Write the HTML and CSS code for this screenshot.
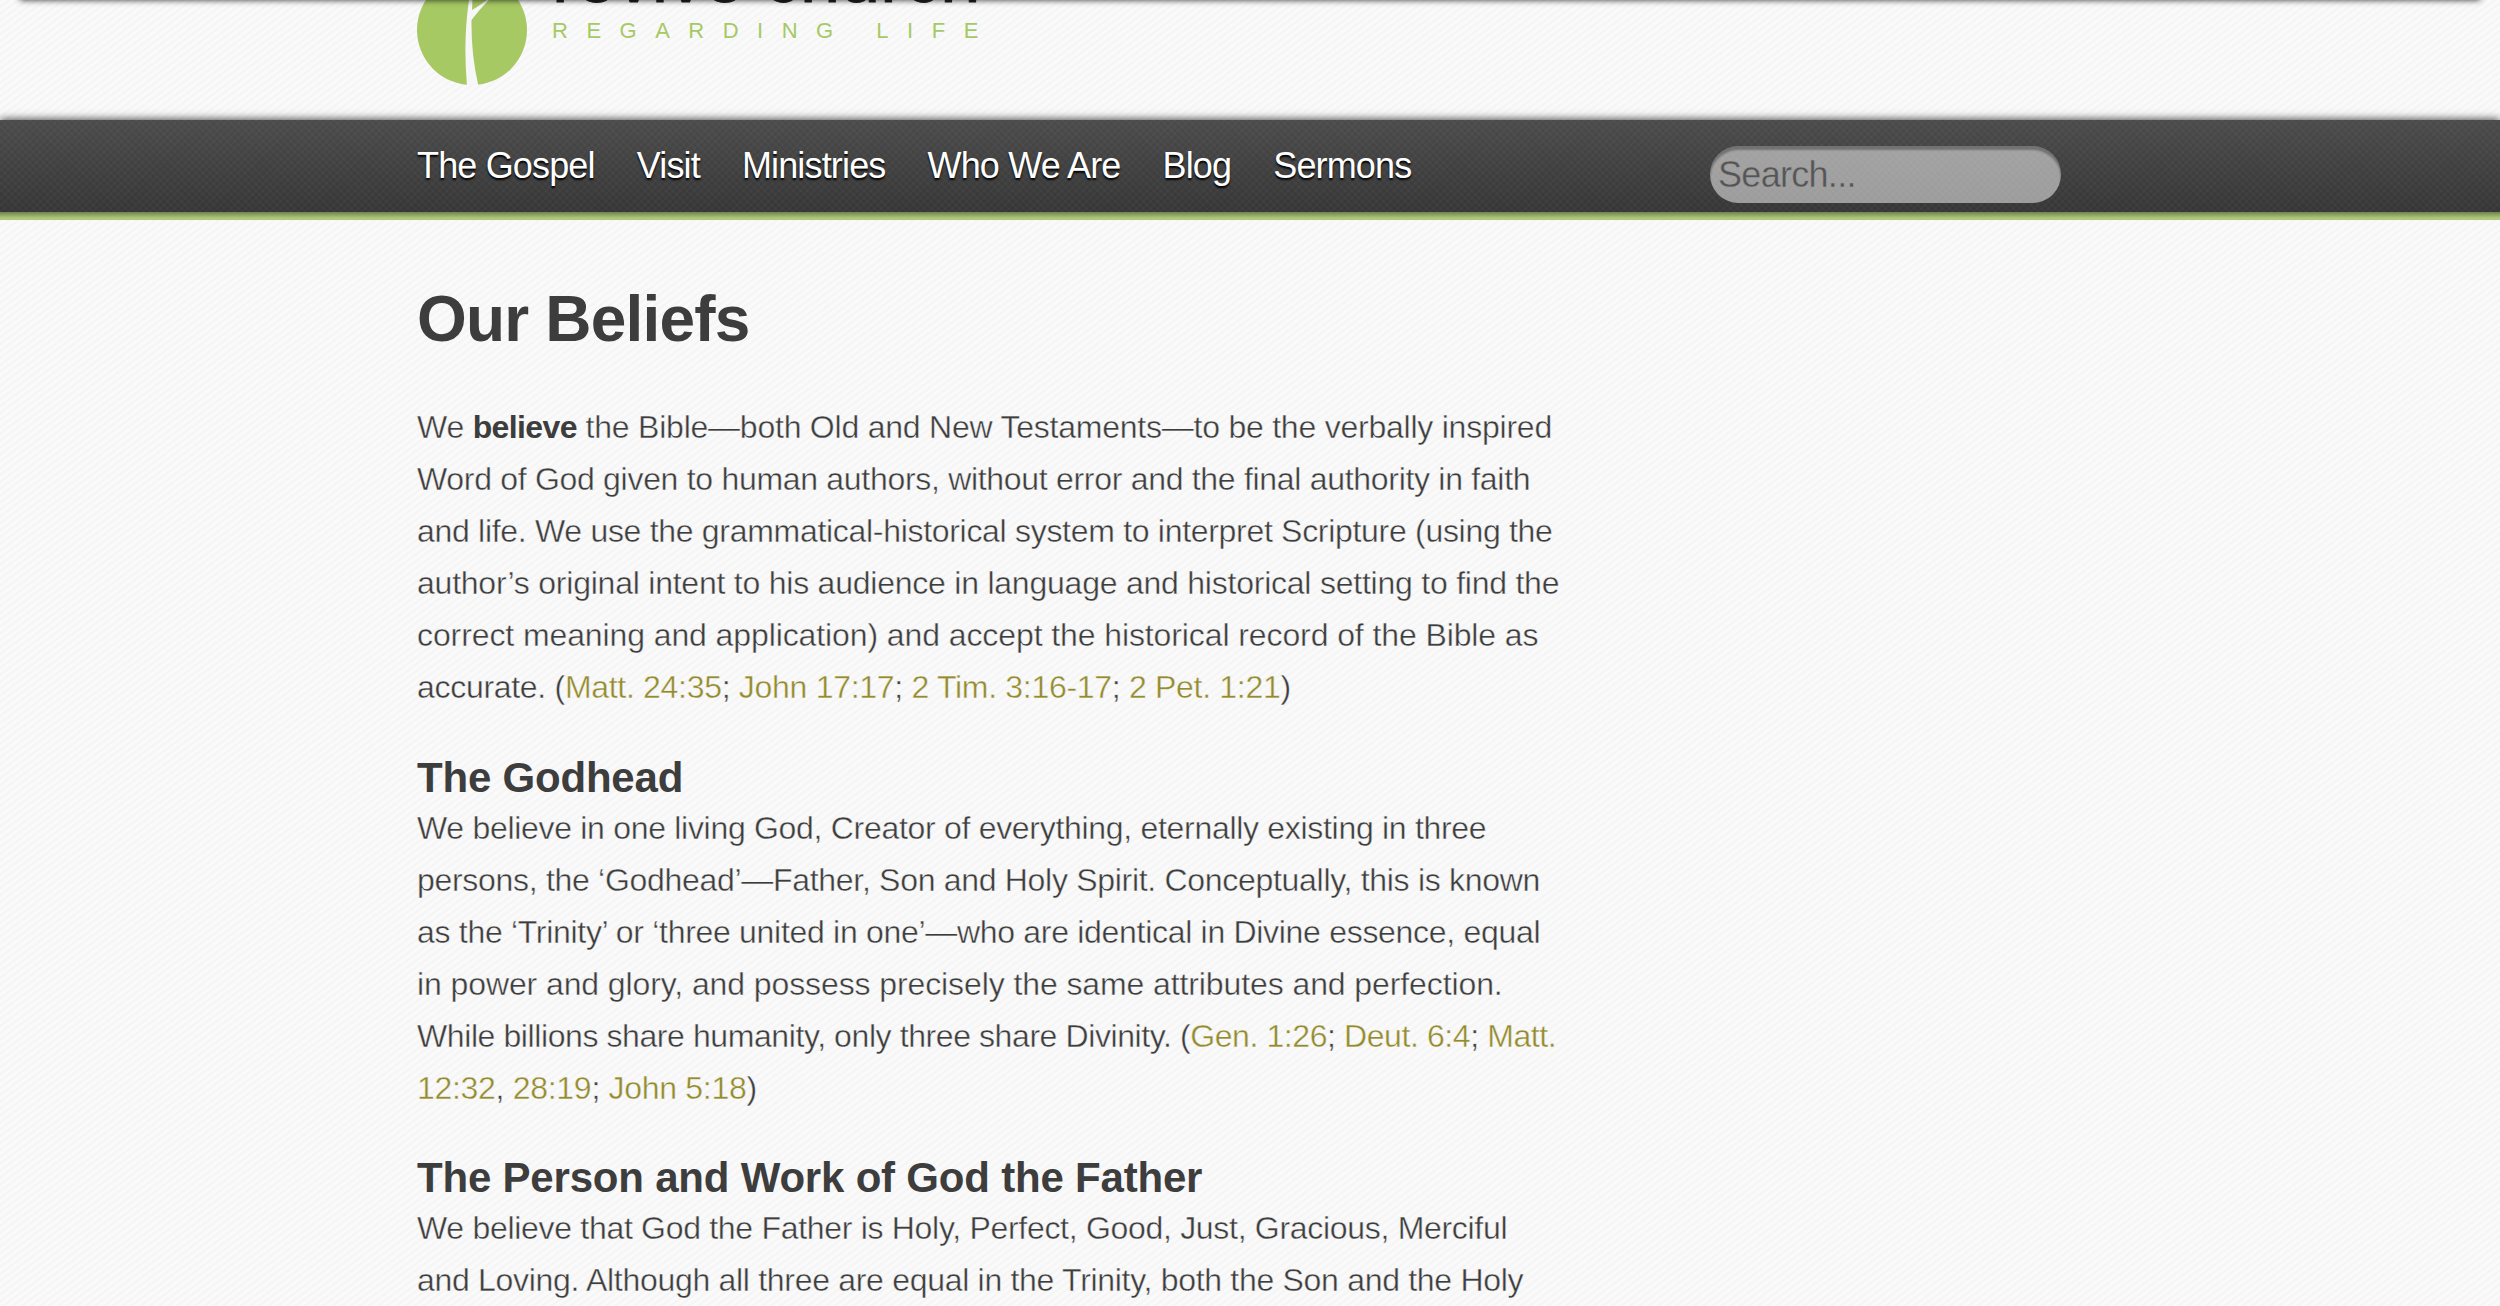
FILE: index.html
```html
<!DOCTYPE html>
<html lang="en">
<head>
    <meta charset="UTF-8">
    <meta name="viewport" content="width=device-width, initial-scale=1.0">
    <title>Our Beliefs</title>
    <link rel="stylesheet" href="styles.css">
</head>
<body>
    <header class="header">
        <div class="container brand">
            <svg class="logo" width="110" height="110" viewBox="0 0 110 110">
                <circle cx="55" cy="55" r="55" fill="#a6c964"/>
                <path d="M50 111 Q46 65 52 25 L54 10 L56 10 L55 35 Q64 30 80 17 Q66 30 54.500 45 Q54 80 61.500 111 Z" fill="#f7f7f7"/>
            </svg>
            <div class="brand-text">
                <div class="brand-name">revive church</div>
                <div class="tagline">REGARDING LIFE</div>
            </div>
        </div>
    </header>

    <nav class="navbar">
        <div class="container nav-inner">
            <ul class="menu">
                <li><a href="#">The Gospel</a></li>
                <li><a href="#">Visit</a></li>
                <li><a href="#">Ministries</a></li>
                <li><a href="#">Who We Are</a></li>
                <li><a href="#">Blog</a></li>
                <li><a href="#">Sermons</a></li>
            </ul>
            <input class="search" type="text" placeholder="Search...">
        </div>
    </nav>

    <main class="container content">
        <h1>Our Beliefs</h1>
        <p><span class="even">We <strong>believe</strong> the Bible—both Old and New Testaments—to be the verbally inspired</span><br>
        Word of God given to human authors, without error and the final authority in faith<br>
        and life. We use the grammatical-historical system to interpret Scripture (using the<br>
        <span class="even">author’s original intent to his audience in language and historical setting to find the</span><br>
        <span class="loose">correct meaning and application) and accept the historical record of the Bible as</span><br>
        accurate. (<a href="#">Matt. 24:35</a>; <a href="#">John 17:17</a>; <a href="#">2 Tim. 3:16-17</a>; <a href="#">2 Pet. 1:21</a>)</p>

        <h2>The Godhead</h2>
        <p>We believe in one living God, Creator of everything, eternally existing in three<br>
        persons, the ‘Godhead’—Father, Son and Holy Spirit. Conceptually, this is known<br>
        as the ‘Trinity’ or ‘three united in one’—who are identical in Divine essence, equal<br>
        <span class="loose">in power and glory, and possess precisely the same attributes and perfection.</span><br>
        <span class="tight">While billions share humanity, only three share Divinity. (<a href="#">Gen. 1:26</a>; <a href="#">Deut. 6:4</a>; <a href="#">Matt.</a></span><br>
        <a href="#">12:32</a>, <a href="#">28:19</a>; <a href="#">John 5:18</a>)</p>

        <h2>The Person and Work of God the Father</h2>
        <p>We believe that God the Father is Holy, Perfect, Good, Just, Gracious, Merciful<br>
        and Loving. Although all three are equal in the Trinity, both the Son and the Holy</p>
    </main>
</body>
</html>
```

FILE: styles.css
```css
* {
    box-sizing: border-box;
}
body {
    margin: 0;
    height: 1306px;
    overflow: hidden;
    font-family: "Helvetica Neue", "Liberation Sans", Arial, sans-serif;
    font-weight: 300;
    color: #3d3d3d;
    background: #f8f8f8 repeating-linear-gradient(143deg, #f4f4f4 0, #fafafa 2px, #fafafa 3.5px, #f4f4f4 5.5px);
}
.container {
    width: 1666px;
    margin: 0 auto;
}
.header {
    position: relative;
    height: 120px;
    overflow: hidden;
}
/* soft shadow along the top edge */
.header::before {
    content: "";
    position: absolute;
    top: -10px;
    left: 20px;
    right: 20px;
    height: 10px;
    box-shadow: 0 0 6px rgba(0, 0, 0, 0.8);
}
.brand {
    display: flex;
}
.logo {
    margin-top: -25px;
}
.brand-text {
    margin: -56px 0 0 25px;
}
.brand-name {
    font-size: 72px;
    line-height: 66px;
    color: #231f20;
    -webkit-text-stroke: 1px #231f20;
}
.tagline {
    margin-top: 9px;
    font-size: 22px;
    line-height: 24px;
    letter-spacing: 18.5px;
    color: #a6c964;
}
.navbar {
    position: relative;
    height: 100px;
    border-bottom: 8px solid #acc878;
    background: repeating-linear-gradient(45deg, rgba(255, 255, 255, 0.02) 0 2px, transparent 2px 5px), repeating-linear-gradient(135deg, rgba(255, 255, 255, 0.02) 0 2px, transparent 2px 5px), linear-gradient(#4b4b4b, #363636);
    background-clip: padding-box;
    box-shadow: 0 -1px 8px rgba(0, 0, 0, 0.7);
    /* keep the shadow above the bar only */
    clip-path: inset(-12px 0 0 0);
}
.navbar::after {
    content: "";
    position: absolute;
    left: 0;
    right: 0;
    top: 100%;
    height: 6px;
    background: linear-gradient(rgba(0, 0, 0, 0.35), transparent);
}
.nav-inner {
    display: flex;
    justify-content: space-between;
}
.menu {
    display: flex;
    gap: 42px;
    margin: 0;
    padding: 25px 0 0;
    list-style: none;
}
.menu a {
    font-size: 36px;
    line-height: 42px;
    letter-spacing: -0.84px;
    color: #fff;
    text-decoration: none;
    text-shadow: 0 2px 2px #000;
}
.search {
    width: 351px;
    height: 57px;
    margin: 26px 22px 0 0;
    padding: 0 8px;
    border: 0;
    border-radius: 29px;
    font: 300 36px "Helvetica Neue", "Liberation Sans", Arial, sans-serif;
    letter-spacing: -0.7px;
    background: rgba(255, 255, 255, 0.5);
    box-shadow: inset 0 4px 2px rgba(0, 0, 0, 0.3);
}
.search::placeholder {
    color: #555;
    -webkit-text-stroke: 0.4px #a0a0a0;
}
.content {
    padding-top: 67px;
    white-space: nowrap;
}
h1 {
    margin: 0 0 50px;
    font-size: 64px;
    line-height: 64px;
    letter-spacing: -0.8px;
}
h2 {
    margin: 39.5px 0 0;
    font-size: 42px;
    line-height: 49px;
    letter-spacing: -0.2px;
}
/* thin stroke in the page colour slims the letters down to a light weight */
p {
    margin: 0;
    font-size: 32px;
    line-height: 52px;
    letter-spacing: -0.3px;
    -webkit-text-stroke: 0.4px #f8f8f8;
}
p a {
    color: #948b2c;
    text-decoration: none;
}
strong {
    font-weight: 700;
    letter-spacing: -0.6px;
    -webkit-text-stroke: 0;
}
.even {
    letter-spacing: -0.23px;
}
.loose {
    letter-spacing: -0.1px;
}
.tight {
    letter-spacing: -0.41px;
}
```
